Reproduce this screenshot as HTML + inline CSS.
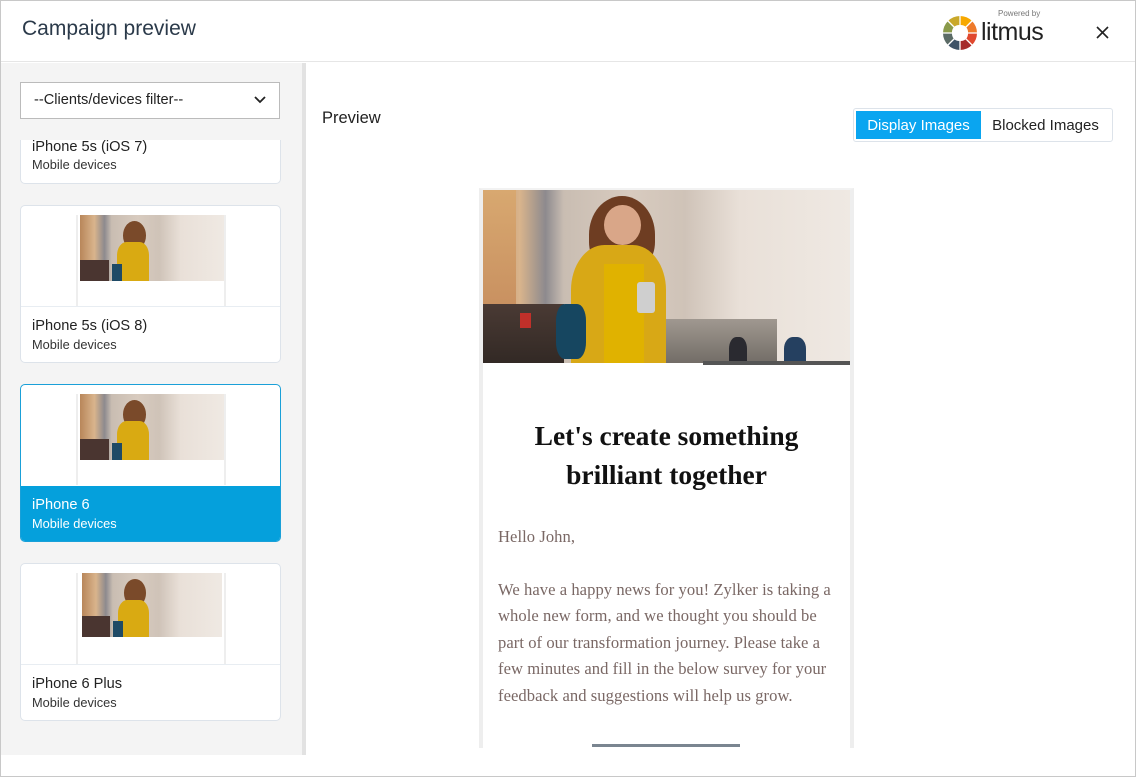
<!DOCTYPE html>
<html><head><meta charset="utf-8"><style>
*{box-sizing:border-box;margin:0;padding:0}
body{width:1136px;height:777px;overflow:hidden;background:#fff;font-family:"Liberation Sans","DejaVu Sans",sans-serif;position:relative}
.abs{position:absolute}
.frame{position:absolute;left:0;top:0;width:1136px;height:777px;border:1px solid #c8c8c8;pointer-events:none}
.photo{position:absolute;overflow:hidden;background:linear-gradient(90deg,#b8865a 0%,#d9b48c 10%,#8d8a8e 17%,#c9bdb2 22%,#d8cbbf 40%,#cfc3b8 55%,#e9e0d8 70%,#efe9e3 100%)}
.photo i{position:absolute;display:block}
.thumb{position:absolute;background:#fff;border-left:2px solid #eee;border-right:2px solid #eee;overflow:hidden}
.card{position:absolute;left:20px;width:261px;background:#fff;border:1px solid #dde3ea;border-radius:5px;overflow:hidden}
.card .t{position:absolute;left:11px;font-size:14.6px;color:#222}
.card .s{position:absolute;left:11px;font-size:12.8px;color:#333}
.p{font-family:"Liberation Serif",serif;color:#7a6865;font-size:16.6px;letter-spacing:0.05px;position:absolute;left:498px;white-space:nowrap}
</style></head><body>
<div class="abs" style="left:0;top:0;width:1136px;height:62px;border-bottom:1px solid #e6e6e6"></div>
<div class="abs" style="left:22px;top:17px;font-size:21px;color:#2b3a4a">Campaign preview</div>
<svg class="abs" style="left:942px;top:15px" width="36" height="36" viewBox="-18 -18 36 36">
<path d="M0-17A17 17 0 0 1 12 -12L6 -6A8 8 0 0 0 0 -8Z" fill="#f7a800"/>
<path d="M12-12A17 17 0 0 1 17 0L8 0A8 8 0 0 0 6 -6Z" fill="#ee7a2a"/>
<path d="M17 0A17 17 0 0 1 12 12L6 6A8 8 0 0 0 8 0Z" fill="#e0482e"/>
<path d="M12 12A17 17 0 0 1 0 17L0 8A8 8 0 0 0 6 6Z" fill="#a62a2a"/>
<path d="M0 17A17 17 0 0 1 -12 12L-6 6A8 8 0 0 0 0 8Z" fill="#3e5368"/>
<path d="M-12 12A17 17 0 0 1 -17 0L-8 0A8 8 0 0 0 -6 6Z" fill="#5b6b66"/>
<path d="M-17 0A17 17 0 0 1 -12 -12L-6 -6A8 8 0 0 0 -8 0Z" fill="#8a9a4a"/>
<path d="M-12 -12A17 17 0 0 1 0 -17L0 -8A8 8 0 0 0 -6 -6Z" fill="#c9a82a"/>
<g stroke="#fff" stroke-width="1.3"><line x1="0" y1="-18" x2="0" y2="18"/><line x1="-18" y1="0" x2="18" y2="0"/><line x1="-13" y1="-13" x2="13" y2="13"/><line x1="13" y1="-13" x2="-13" y2="13"/></g>
</svg>
<div class="abs" style="left:998px;top:9px;font-size:8px;color:#777">Powered by</div>
<div class="abs" style="left:981px;top:18px;font-size:25px;color:#222;letter-spacing:-0.5px">litmus</div>
<svg class="abs" style="left:1096px;top:26px" width="13" height="13"><path d="M1 1L12 12M12 1L1 12" stroke="#222" stroke-width="1.6"/></svg>

<div class="abs" style="left:0;top:63px;width:302px;height:692px;background:#f4f4f4"></div>
<div class="abs" style="left:302px;top:63px;width:4px;height:692px;background:#e2e2e2"></div>
<div class="abs" style="left:20px;top:82px;width:260px;height:37px;background:#fff;border:1px solid #bbb;font-size:14.6px;color:#222;padding:9px 0 0 13px">--Clients/devices filter--</div>
<svg class="abs" style="left:254px;top:96px" width="12" height="8"><path d="M1 1L6 6L11 1" stroke="#222" stroke-width="1.8" fill="none"/></svg>

<div class="card" style="top:130px;height:54px;border-top:none;border-radius:0 0 5px 5px"><div class="t" style="top:9px">iPhone 5s (iOS 7)</div><div class="s" style="top:27px">Mobile devices</div></div>
<div class="abs" style="left:20px;top:119px;width:262px;height:21px;background:#f4f4f4"></div>

<div class="card" style="top:205px;height:158px">
 <div class="thumb" style="left:55px;top:9px;width:150px;height:91px">
  <div class="photo" style="left:2px;top:0;width:144px;height:72px"><i style="left:0;top:62%;width:20%;height:38%;background:#4a3530"></i><i style="left:30%;top:8%;width:16%;height:40%;background:#7a4a2a;border-radius:50%"></i><i style="left:26%;top:38%;width:22%;height:62%;background:#d9aa12;border-radius:30% 30% 0 0"></i><i style="left:22%;top:68%;width:7%;height:26%;background:#1e4a66"></i><i style="left:0;top:92%;width:100%;height:8%;background:#fff"></i></div>
 </div>
 <div class="abs" style="left:0;top:100px;width:261px;height:1px;background:#e8edf2"></div>
 <div class="t" style="top:112px">iPhone 5s (iOS 8)</div><div class="s" style="top:131px">Mobile devices</div>
</div>

<div class="card" style="top:384px;height:158px;border-color:#1aa0d8">
 <div class="thumb" style="left:55px;top:9px;width:150px;height:91px">
  <div class="photo" style="left:2px;top:0;width:144px;height:72px"><i style="left:0;top:62%;width:20%;height:38%;background:#4a3530"></i><i style="left:30%;top:8%;width:16%;height:40%;background:#7a4a2a;border-radius:50%"></i><i style="left:26%;top:38%;width:22%;height:62%;background:#d9aa12;border-radius:30% 30% 0 0"></i><i style="left:22%;top:68%;width:7%;height:26%;background:#1e4a66"></i><i style="left:0;top:92%;width:100%;height:8%;background:#fff"></i></div>
 </div>
 <div class="abs" style="left:0;top:101px;width:261px;height:57px;background:#05a0dc"></div>
 <div class="t" style="top:112px;color:#fff">iPhone 6</div><div class="s" style="top:131px;color:#fff">Mobile devices</div>
</div>

<div class="card" style="top:563px;height:158px">
 <div class="thumb" style="left:55px;top:9px;width:150px;height:91px">
  <div class="photo" style="left:4px;top:0;width:140px;height:70px"><i style="left:0;top:62%;width:20%;height:38%;background:#4a3530"></i><i style="left:30%;top:8%;width:16%;height:40%;background:#7a4a2a;border-radius:50%"></i><i style="left:26%;top:38%;width:22%;height:62%;background:#d9aa12;border-radius:30% 30% 0 0"></i><i style="left:22%;top:68%;width:7%;height:26%;background:#1e4a66"></i><i style="left:0;top:92%;width:100%;height:8%;background:#fff"></i></div>
 </div>
 <div class="abs" style="left:0;top:100px;width:261px;height:1px;background:#e8edf2"></div>
 <div class="t" style="top:112px">iPhone 6 Plus</div><div class="s" style="top:131px">Mobile devices</div>
</div>

<div class="abs" style="left:322px;top:109px;font-size:16.5px;color:#222">Preview</div>
<div class="abs" style="left:853px;top:108px;width:260px;height:34px;border:1px solid #dde3ea;border-radius:3px;background:#fff"></div>
<div class="abs" style="left:856px;top:111px;width:125px;height:28px;background:#0aa5f0;color:#fff;font-size:15px;text-align:center;line-height:30px">Display Images</div>
<div class="abs" style="left:981px;top:111px;width:129px;height:28px;color:#222;font-size:15px;text-align:center;line-height:30px">Blocked Images</div>

<div class="abs" style="left:479px;top:188px;width:375px;height:560px;background:#fff;border-left:4px solid #eee;border-right:4px solid #eee;border-top:2px solid #f2f2f2"></div>
<div class="photo" style="left:483px;top:190px;width:367px;height:184px">
 <i style="left:0;top:0;width:9%;height:65%;background:linear-gradient(180deg,#d8a870,#c89060)"></i>
 <i style="left:0;top:62%;width:22%;height:38%;background:linear-gradient(180deg,#4a3a34,#2e2622)"></i>
 <i style="left:10%;top:67%;width:3%;height:8%;background:#c0302a"></i>
 <i style="left:45%;top:70%;width:35%;height:28%;background:linear-gradient(180deg,#a09890,#6b6660)"></i>
 <i style="left:29%;top:3%;width:18%;height:42%;background:#6e3d22;border-radius:50% 50% 40% 40%"></i>
 <i style="left:33%;top:8%;width:10%;height:22%;background:#d9a688;border-radius:50%"></i>
 <i style="left:24%;top:30%;width:26%;height:70%;background:#d8a816;border-radius:35% 35% 0 0"></i>
 <i style="left:33%;top:40%;width:11%;height:60%;background:#e0b200"></i>
 <i style="left:20%;top:62%;width:8%;height:30%;background:#164660;border-radius:30%"></i>
 <i style="left:42%;top:50%;width:5%;height:17%;background:#cfcfcf;border-radius:3px"></i>
 <i style="left:67%;top:80%;width:5%;height:16%;background:#2a2a30;border-radius:40% 40% 0 0"></i>
 <i style="left:82%;top:80%;width:6%;height:16%;background:#254060;border-radius:40% 40% 0 0"></i>
 <i style="left:0;top:94%;width:100%;height:6%;background:#fff"></i>
 <i style="left:60%;top:93%;width:40%;height:2%;background:#555"></i>
</div>
<div class="abs" style="left:483px;top:416px;width:367px;text-align:center;font-family:'Liberation Serif',serif;font-weight:bold;font-size:27.5px;line-height:39px;color:#111;white-space:nowrap">Let's create something<br>brilliant together</div>
<div class="p" style="top:527px">Hello John,</div>
<div class="p" style="top:580px">We have a happy news for you! Zylker is taking a</div>
<div class="p" style="top:606px">whole new form, and we thought you should be</div>
<div class="p" style="top:633px">part of our transformation journey. Please take a</div>
<div class="p" style="top:659px">few minutes and fill in the below survey for your</div>
<div class="p" style="top:686px">feedback and suggestions will help us grow.</div>
<div class="abs" style="left:592px;top:744px;width:148px;height:3px;background:#7a8590"></div>
<div class="abs" style="left:0;top:755px;width:1136px;height:22px;background:#fff"></div>
<div class="frame"></div>
</body></html>
